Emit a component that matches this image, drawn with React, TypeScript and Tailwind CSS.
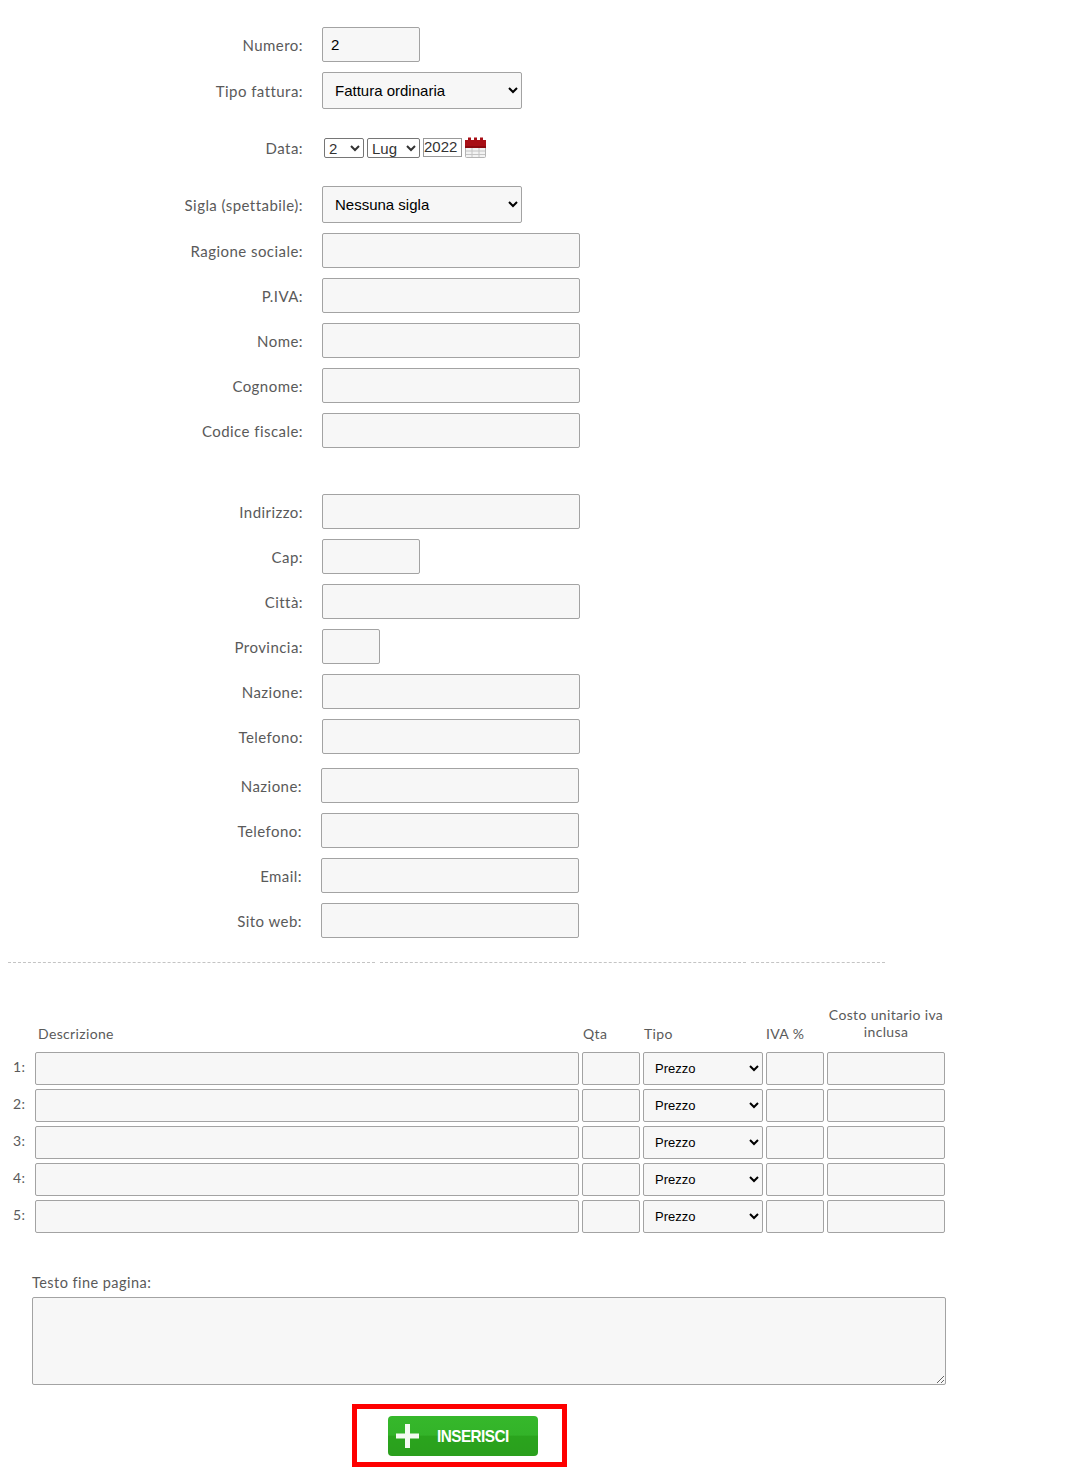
const inputCls =
  "block h-[35px] rounded-[2px] border border-[#a3a3a3] bg-[#f7f7f7] px-2 text-[15px] tracking-normal text-black font-['Liberation_Sans',sans-serif]";
const selectCls =
  "block h-[37px] w-[200px] rounded-[2px] border border-[#a3a3a3] bg-[#f7f7f7] px-2 text-[15px] tracking-normal text-black font-['Liberation_Sans',sans-serif]";
const cellCls = "block h-[33px] rounded-[2px] border border-[#a3a3a3] bg-[#f7f7f7]";

function Row({ label, className, labelW = "w-[303px]", children }: { label: string; className?: string; labelW?: string; children: React.ReactNode }) {
  return (
    <div className={`flex items-center gap-[19px] ${className ?? ""}`}>
      <label className={`${labelW} pt-[1px] text-right leading-[20px]`}>{label}</label>
      {children}
    </div>
  );
}

function CalendarIcon() {
  return (
    <svg width="21" height="21" viewBox="0 0 21 21" className="-mt-[1px]">
      <rect x="0.5" y="6" width="20" height="14.5" rx="1" fill="#f3f3f3" stroke="#b5b5b5" />
      <path d="M7 10v10M14 10v10M1 14h19M1 17.500h19" stroke="#c4c4c4" />
      <path d="M0 3h3V0.500h3V3h3V0.500h3V3h3V0.500h3V3h3v7a1 1 0 0 1-1 1H1a1 1 0 0 1-1-1z" fill="#a80f16" />
      <path d="M0 9h21v2H0z" fill="#8c0a10" />
    </svg>
  );
}

function LineRow() {
  return (
    <div className="grid grid-cols-[32px_544px_58px_120px_58px_118px] gap-x-[3px]">
      <div />
      <div className={cellCls} />
      <div className={cellCls} />
      <select defaultValue="Prezzo" className={`${cellCls} w-full pl-[7px] text-[13px] tracking-normal text-black font-['Liberation_Sans',sans-serif]`}>
        <option>Prezzo</option>
      </select>
      <div className={cellCls} />
      <div className={cellCls} />
    </div>
  );
}

export default function App() {
  const lines = [1, 2, 3, 4, 5];
  return (
    <div className="h-[1484px] overflow-hidden bg-white pt-[27px] font-['Lato',sans-serif] text-[15px] tracking-[0.45px] text-[#5a5a5a]">
      <Row label="Numero:">
        <input className={`${inputCls} w-[98px]`} defaultValue="2" />
      </Row>
      <Row label="Tipo fattura:" className="mt-[10px]">
        <select className={selectCls} defaultValue="Fattura ordinaria">
          <option>Fattura ordinaria</option>
        </select>
      </Row>
      <Row label="Data:" className="mt-[28px]">
        <div className="ml-[2px] mt-[1px] flex h-[20px] items-start gap-[3px] font-['Liberation_Sans',sans-serif] text-[15px] tracking-normal">
          <select defaultValue="2" className="h-[20px] w-[40px] rounded-[2px] border border-[#767676] bg-white text-[#333]">
            <option>2</option>
          </select>
          <select defaultValue="Lug" className="h-[20px] w-[53px] rounded-[2px] border border-[#767676] bg-white text-[#333]">
            <option>Lug</option>
          </select>
          <input defaultValue="2022" className="h-[19px] w-[39px] border border-[#999] bg-white text-[#333]" />
          <CalendarIcon />
        </div>
      </Row>
      <Row label="Sigla (spettabile):" className="mt-[28px]">
        <select className={selectCls} defaultValue="Nessuna sigla">
          <option>Nessuna sigla</option>
        </select>
      </Row>
      <div className="mt-[10px] flex flex-col gap-[10px]">
        {["Ragione sociale:", "P.IVA:", "Nome:", "Cognome:", "Codice fiscale:"].map((l) => (
          <Row key={l} label={l}>
            <input className={`${inputCls} w-[258px]`} />
          </Row>
        ))}
      </div>
      <div className="mt-[46px] flex flex-col gap-[10px]">
        <Row label="Indirizzo:">
          <input className={`${inputCls} w-[258px]`} />
        </Row>
        <Row label="Cap:">
          <input className={`${inputCls} w-[98px]`} />
        </Row>
        <Row label="Città:">
          <input className={`${inputCls} w-[258px]`} />
        </Row>
        <Row label="Provincia:">
          <input className={`${inputCls} w-[58px]`} />
        </Row>
        <Row label="Nazione:">
          <input className={`${inputCls} w-[258px]`} />
        </Row>
        <Row label="Telefono:">
          <input className={`${inputCls} w-[258px]`} />
        </Row>
      </div>
      <div className="mt-[14px] flex flex-col gap-[10px]">
        {["Nazione:", "Telefono:", "Email:", "Sito web:"].map((l) => (
          <Row key={l} label={l} labelW="w-[302px]">
            <input className={`${inputCls} w-[258px]`} />
          </Row>
        ))}
      </div>

      <div className="ml-[8px] mt-[24px] flex gap-[5px]">
        <div className="w-[367px] border-t border-dashed border-[#c4c4c4]" />
        <div className="w-[366px] border-t border-dashed border-[#c4c4c4]" />
        <div className="w-[134px] border-t border-dashed border-[#c4c4c4]" />
      </div>

      <div className="mt-[43px] grid grid-cols-[32px_544px_58px_120px_58px_118px] items-end gap-x-[3px] text-[14px] leading-[17px] tracking-[0.35px]">
        <div />
        <div className="pb-[10px] pl-[3px]">Descrizione</div>
        <div className="pb-[10px] pl-[1px]">Qta</div>
        <div className="pb-[10px] pl-[1px]">Tipo</div>
        <div className="pb-[10px]">IVA %</div>
        <div className="-ml-[3px] -mr-[3px] whitespace-nowrap pb-[12px] text-center">
          Costo unitario iva
          <br />
          inclusa
        </div>
      </div>
      <div className="relative flex flex-col gap-[4px]">
        {lines.map((n) => (
          <div key={n} className="relative">
            <span className="absolute left-[13px] top-[4px] text-[14px]">{n}:</span>
            <LineRow />
          </div>
        ))}
      </div>

      <div className="ml-[32px] mt-[41px] w-[914px]">
        <div className="text-[14.5px] leading-[18px]">Testo fine pagina:</div>
        <textarea className="mt-[5px] block h-[88px] w-full rounded-[2px] border border-[#a3a3a3] bg-[#f7f7f7]" />
      </div>

      <div className="ml-[352px] mt-[19px] flex h-[63px] w-[215px] items-center border-[5px] border-[#fe0000] pl-[31px] pt-[1px]">
        <button className="flex h-[40px] w-[150px] items-center rounded-[4px] bg-[linear-gradient(#36b82b_0%,#33b329_48%,#2aa41d_50%,#2a9f1d_100%)] pl-[8px] text-white">
          <svg width="23" height="24" viewBox="0 0 23 24">
            <path d="M9 0h5v9.500h9v5h-9V24H9v-9.500H0v-5h9z" fill="#f4fbf2" />
          </svg>
          <span className="ml-[18px] origin-left pt-[2px] font-['Liberation_Sans',sans-serif] text-[17px] font-bold tracking-[-0.6px] [transform:scaleX(0.9)]">INSERISCI</span>
        </button>
      </div>
    </div>
  );
}
